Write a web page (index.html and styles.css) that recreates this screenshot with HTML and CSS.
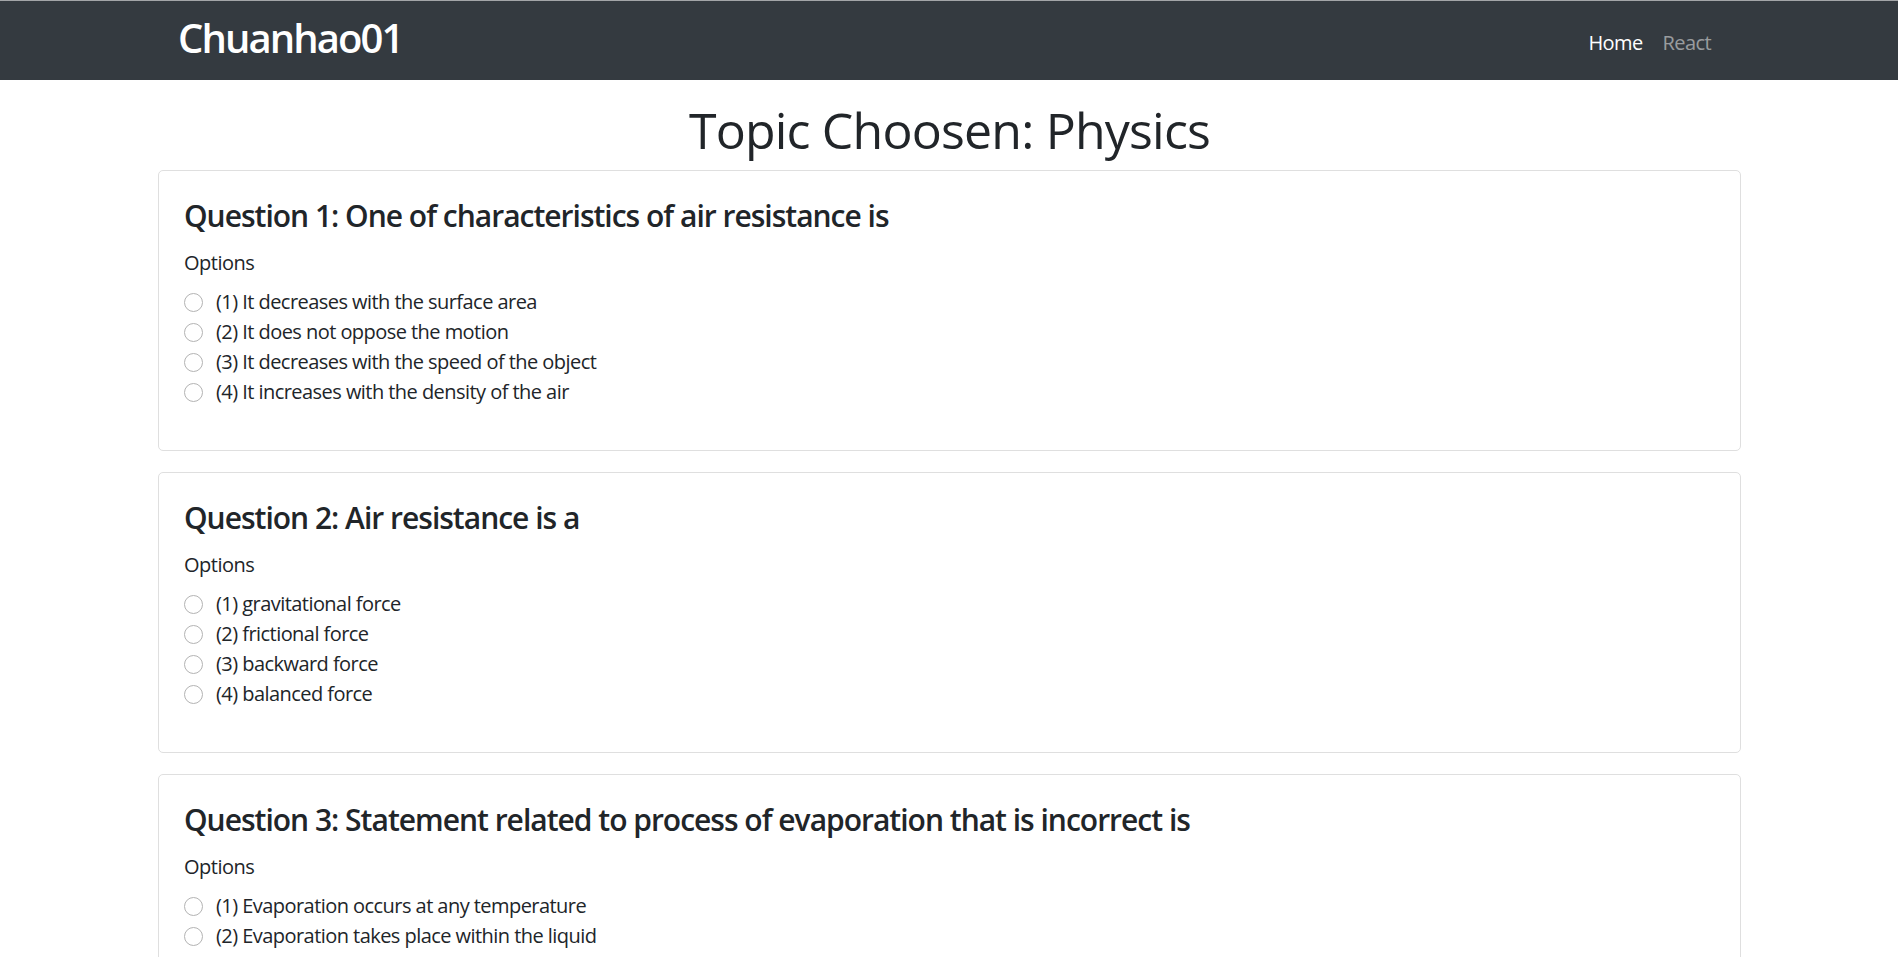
FILE: index.html
```html
<!DOCTYPE html>
<html lang="en">
<head>
<meta charset="utf-8">
<title>Chuanhao01</title>
<link rel="stylesheet" href="styles.css">
</head>
<body>
<nav class="navbar">
  <a class="brand" href="#">Chuanhao01</a>
  <ul class="nav-links">
    <li><a class="nav-link active" href="#">Home</a></li>
    <li><a class="nav-link" href="#">React</a></li>
  </ul>
</nav>
<main class="container">
  <h1 class="page-title">Topic Choosen: Physics</h1>

  <section class="card">
    <h4 class="question">Question 1: One of characteristics of air resistance is</h4>
    <div class="options-label">Options</div>
    <label class="option"><input type="radio" name="q1" class="radio"><span>(1) It decreases with the surface area</span></label>
    <label class="option"><input type="radio" name="q1" class="radio"><span>(2) It does not oppose the motion</span></label>
    <label class="option"><input type="radio" name="q1" class="radio"><span>(3) It decreases with the speed of the object</span></label>
    <label class="option"><input type="radio" name="q1" class="radio"><span>(4) It increases with the density of the air</span></label>
  </section>

  <section class="card">
    <h4 class="question">Question 2: Air resistance is a</h4>
    <div class="options-label">Options</div>
    <label class="option"><input type="radio" name="q2" class="radio"><span>(1) gravitational force</span></label>
    <label class="option"><input type="radio" name="q2" class="radio"><span>(2) frictional force</span></label>
    <label class="option"><input type="radio" name="q2" class="radio"><span>(3) backward force</span></label>
    <label class="option"><input type="radio" name="q2" class="radio"><span>(4) balanced force</span></label>
  </section>

  <section class="card">
    <h4 class="question">Question 3: Statement related to process of evaporation that is incorrect is</h4>
    <div class="options-label">Options</div>
    <label class="option"><input type="radio" name="q3" class="radio"><span>(1) Evaporation occurs at any temperature</span></label>
    <label class="option"><input type="radio" name="q3" class="radio"><span>(2) Evaporation takes place within the liquid</span></label>
    <label class="option"><input type="radio" name="q3" class="radio"><span>(3) Evaporation causes cooling</span></label>
    <label class="option"><input type="radio" name="q3" class="radio"><span>(4) Evaporation increases with the surface area</span></label>
  </section>
</main>
</body>
</html>
```

FILE: styles.css
```css
* {
  box-sizing: border-box;
}

html, body {
  margin: 0;
  padding: 0;
  background: #fff;
}

body {
  font-family: "Open Sans", "Noto Sans", "Liberation Sans", sans-serif;
  font-size: 20px;
  line-height: 1.5;
  color: #212529;
}

.navbar {
  display: flex;
  align-items: center;
  justify-content: space-between;
  height: 80px;
  padding: 0 177px;
  background: #343a40;
  border-top: 1px solid #a3a5a8;
}

.brand {
  color: #fff;
  text-decoration: none;
  font-size: 40px;
  font-weight: 600;
  line-height: 1.2;
  letter-spacing: -1.9px;
  margin-top: -5px;
  margin-left: 1px;
}

.nav-links {
  display: flex;
  list-style: none;
  margin: 4px 0 0;
  padding: 0;
}

.nav-link {
  display: block;
  padding: 0 10px;
  color: rgba(255, 255, 255, 0.5);
  text-decoration: none;
  letter-spacing: -0.6px;
}

.nav-link.active {
  color: #fff;
}

.container {
  padding: 0 157px 0 158px;
}

.page-title {
  margin: 20px 0 10px;
  text-align: center;
  font-size: 50px;
  font-weight: 500;
  line-height: 1.2;
  letter-spacing: -0.8px;
}

.card {
  display: flex;
  flex-direction: column;
  margin-bottom: 21px;
  padding: 27px 25px 43px;
  border: 1px solid #dfdfdf;
  border-radius: 5px;
}

.question {
  margin: 0 0 14px;
  font-size: 30px;
  font-weight: 600;
  line-height: 1.2;
  letter-spacing: -1px;
}

.options-label {
  margin-bottom: 9px;
  letter-spacing: -0.5px;
}

.option {
  display: flex;
  align-items: center;
  height: 30px;
  letter-spacing: -0.55px;
}

.radio {
  appearance: none;
  -webkit-appearance: none;
  flex: none;
  width: 19px;
  height: 19px;
  margin: 0 13px 0 0;
  border: 1px solid #b3b3b3;
  border-radius: 50%;
  background: #fff;
}
```
